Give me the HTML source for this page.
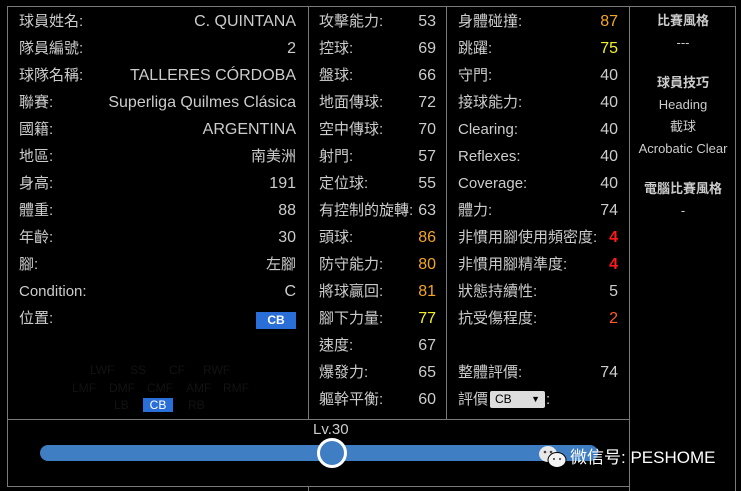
<!DOCTYPE html>
<html><head><meta charset="utf-8"><style>
body{margin:0;width:741px;height:491px;background:#000;overflow:hidden;position:relative;font-family:"Liberation Sans","Noto Sans CJK TC",sans-serif;color:#ccc;font-size:15px}
.l{position:absolute;height:20px;line-height:20px;white-space:nowrap}
.r{position:absolute;height:20px;line-height:20px;white-space:nowrap;text-align:right;font-size:16px}
.ln{position:absolute;background:#7a7a7a}
.o{color:#f5a623}.y{color:#f2f22a}.rd{color:#ff1a1a;font-weight:bold}.or{color:#ff5a2a}
.g{position:absolute;font-size:12px;color:#121212;line-height:14px}
.c{position:absolute;text-align:center;width:106px;left:630px;font-size:13px;line-height:18px}
</style></head><body>
<div class="ln" style="left:7px;top:6px;width:622px;height:1px"></div>
<div class="ln" style="left:7px;top:6px;width:1px;height:481px"></div>
<div class="ln" style="left:308px;top:6px;width:1px;height:413px"></div>
<div class="ln" style="left:446px;top:6px;width:1px;height:413px"></div>
<div class="ln" style="left:7px;top:419px;width:622px;height:1px"></div>
<div class="ln" style="left:7px;top:486px;width:622px;height:1px"></div>
<div class="ln" style="left:308px;top:486px;width:1px;height:5px"></div>
<div class="ln" style="left:629px;top:6px;width:1px;height:485px"></div>
<div class="ln" style="left:735px;top:6px;width:1px;height:485px"></div>
<div class="ln" style="left:629px;top:6px;width:106px;height:1px"></div>

<div class="l" style="left:19px;top:12px">球員姓名:</div><div class="r" style="right:445px;top:12px">C. QUINTANA</div>
<div class="l" style="left:19px;top:39px">隊員編號:</div><div class="r" style="right:445px;top:39px">2</div>
<div class="l" style="left:19px;top:66px">球隊名稱:</div><div class="r" style="right:445px;top:66px">TALLERES CÓRDOBA</div>
<div class="l" style="left:19px;top:93px">聯賽:</div><div class="r" style="right:445px;top:93px">Superliga Quilmes Clásica</div>
<div class="l" style="left:19px;top:120px">國籍:</div><div class="r" style="right:445px;top:120px">ARGENTINA</div>
<div class="l" style="left:19px;top:147px">地區:</div><div class="r" style="right:445px;top:147px;font-size:15px">南美洲</div>
<div class="l" style="left:19px;top:174px">身高:</div><div class="r" style="right:445px;top:174px">191</div>
<div class="l" style="left:19px;top:201px">體重:</div><div class="r" style="right:445px;top:201px">88</div>
<div class="l" style="left:19px;top:228px">年齡:</div><div class="r" style="right:445px;top:228px">30</div>
<div class="l" style="left:19px;top:255px">腳:</div><div class="r" style="right:445px;top:255px;font-size:15px">左腳</div>
<div class="l" style="left:19px;top:282px">Condition:</div><div class="r" style="right:445px;top:282px">C</div>
<div class="l" style="left:19px;top:309px">位置:</div>
<div style="position:absolute;left:256px;top:312px;width:40px;height:17px;background:#2a6fd8;color:#fff;font-size:12px;font-weight:bold;text-align:center;line-height:17px">CB</div>

<div class="g" style="left:90px;top:363px">LWF</div><div class="g" style="left:130px;top:363px">SS</div><div class="g" style="left:169px;top:363px">CF</div><div class="g" style="left:203px;top:363px">RWF</div>
<div class="g" style="left:72px;top:381px">LMF</div><div class="g" style="left:109px;top:381px">DMF</div><div class="g" style="left:147px;top:381px">CMF</div><div class="g" style="left:186px;top:381px">AMF</div><div class="g" style="left:223px;top:381px">RMF</div>
<div class="g" style="left:114px;top:398px">LB</div><div class="g" style="left:143px;top:398px;width:30px;height:14px;background:#2a6fd8;color:#fff;text-align:center">CB</div><div class="g" style="left:188px;top:398px">RB</div>

<div class="l" style="left:319px;top:12px">攻擊能力:</div><div class="r" style="right:305px;top:12px">53</div>
<div class="l" style="left:319px;top:39px">控球:</div><div class="r" style="right:305px;top:39px">69</div>
<div class="l" style="left:319px;top:66px">盤球:</div><div class="r" style="right:305px;top:66px">66</div>
<div class="l" style="left:319px;top:93px">地面傳球:</div><div class="r" style="right:305px;top:93px">72</div>
<div class="l" style="left:319px;top:120px">空中傳球:</div><div class="r" style="right:305px;top:120px">70</div>
<div class="l" style="left:319px;top:147px">射門:</div><div class="r" style="right:305px;top:147px">57</div>
<div class="l" style="left:319px;top:174px">定位球:</div><div class="r" style="right:305px;top:174px">55</div>
<div class="l" style="left:319px;top:201px">有控制的旋轉:</div><div class="r" style="right:305px;top:201px">63</div>
<div class="l" style="left:319px;top:228px">頭球:</div><div class="r o" style="right:305px;top:228px">86</div>
<div class="l" style="left:319px;top:255px">防守能力:</div><div class="r o" style="right:305px;top:255px">80</div>
<div class="l" style="left:319px;top:282px">將球贏回:</div><div class="r o" style="right:305px;top:282px">81</div>
<div class="l" style="left:319px;top:309px">腳下力量:</div><div class="r y" style="right:305px;top:309px">77</div>
<div class="l" style="left:319px;top:336px">速度:</div><div class="r" style="right:305px;top:336px">67</div>
<div class="l" style="left:319px;top:363px">爆發力:</div><div class="r" style="right:305px;top:363px">65</div>
<div class="l" style="left:319px;top:390px">軀幹平衡:</div><div class="r" style="right:305px;top:390px">60</div>

<div class="l" style="left:458px;top:12px">身體碰撞:</div><div class="r o" style="right:123px;top:12px">87</div>
<div class="l" style="left:458px;top:39px">跳躍:</div><div class="r y" style="right:123px;top:39px">75</div>
<div class="l" style="left:458px;top:66px">守門:</div><div class="r" style="right:123px;top:66px">40</div>
<div class="l" style="left:458px;top:93px">接球能力:</div><div class="r" style="right:123px;top:93px">40</div>
<div class="l" style="left:458px;top:120px">Clearing:</div><div class="r" style="right:123px;top:120px">40</div>
<div class="l" style="left:458px;top:147px">Reflexes:</div><div class="r" style="right:123px;top:147px">40</div>
<div class="l" style="left:458px;top:174px">Coverage:</div><div class="r" style="right:123px;top:174px">40</div>
<div class="l" style="left:458px;top:201px">體力:</div><div class="r" style="right:123px;top:201px">74</div>
<div class="l" style="left:458px;top:228px">非慣用腳使用頻密度:</div><div class="r rd" style="right:123px;top:228px">4</div>
<div class="l" style="left:458px;top:255px">非慣用腳精準度:</div><div class="r rd" style="right:123px;top:255px">4</div>
<div class="l" style="left:458px;top:282px">狀態持續性:</div><div class="r" style="right:123px;top:282px">5</div>
<div class="l" style="left:458px;top:309px">抗受傷程度:</div><div class="r or" style="right:123px;top:309px">2</div>
<div class="l" style="left:458px;top:363px">整體評價:</div><div class="r" style="right:123px;top:363px">74</div>
<div class="l" style="left:458px;top:390px">評價</div>
<div style="position:absolute;left:490px;top:391px;width:55px;height:17px;background:#ddd;border-radius:2px;color:#000;font-size:12px;line-height:17px;padding-left:5px;box-sizing:border-box">CB<span style="position:absolute;right:5px;font-size:9px">▼</span></div>
<div class="l" style="left:546px;top:390px">:</div>

<div class="c" style="top:12px;font-weight:bold">比賽風格</div>
<div class="c" style="top:34px">---</div>
<div class="c" style="top:74px;font-weight:bold">球員技巧</div>
<div class="c" style="top:96px">Heading</div>
<div class="c" style="top:118px">截球</div>
<div class="c" style="top:140px">Acrobatic Clear</div>
<div class="c" style="top:180px;font-weight:bold">電腦比賽風格</div>
<div class="c" style="top:202px">-</div>

<div class="l" style="left:313px;top:420px;font-size:15px">Lv.30</div>
<div style="position:absolute;left:40px;top:445px;width:558px;height:16px;border-radius:8px;background:#3f7ec2"></div>
<div style="position:absolute;left:317px;top:438px;width:24px;height:24px;border-radius:50%;border:3px solid #fff;background:#3f7ec2"></div>
<svg style="position:absolute;left:538px;top:444px" width="30" height="26" viewBox="0 0 30 26"><ellipse cx="10" cy="10" rx="9" ry="8" fill="#e8e8e8"/><ellipse cx="19" cy="16" rx="9" ry="7.5" fill="#f4f4f4" stroke="#000" stroke-width="1"/><circle cx="7" cy="8" r="1.3" fill="#444"/><circle cx="13" cy="8" r="1.3" fill="#444"/><circle cx="16" cy="15" r="1.1" fill="#555"/><circle cx="22" cy="15" r="1.1" fill="#555"/></svg>
<div class="l" style="left:570px;top:448px;color:#fff;font-size:17px">微信号: PESHOME</div>
</body></html>
